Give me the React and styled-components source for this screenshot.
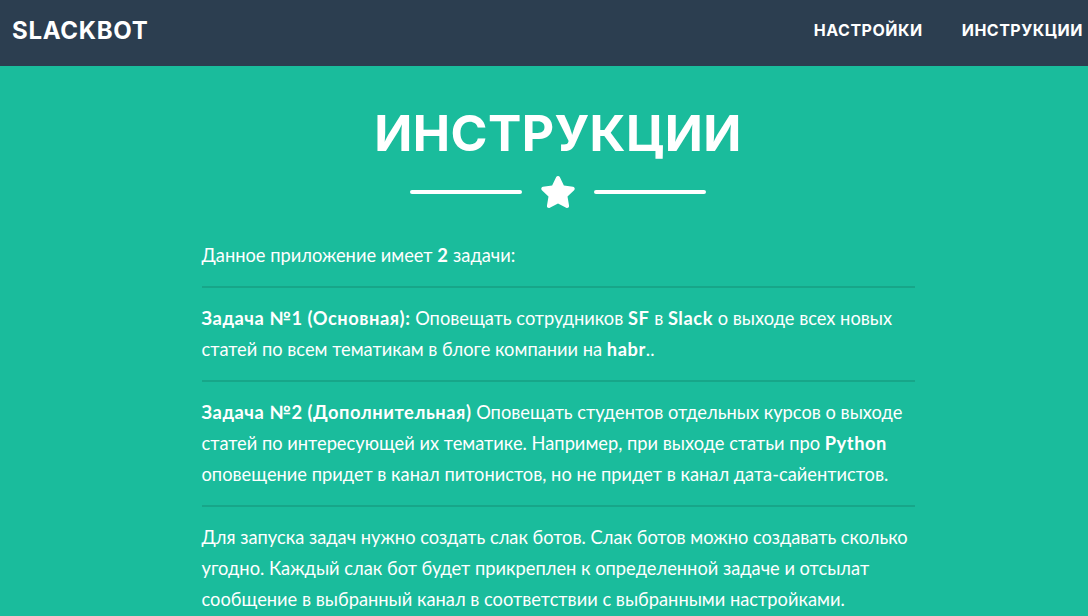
import React from 'react'
import styled, { createGlobalStyle } from 'styled-components'

const GlobalStyle = createGlobalStyle`
  html, body {
    margin: 0;
    padding: 0;
    background: #1abc9c;
  }
  body {
    font-family: Lato, "Liberation Sans", sans-serif;
  }
  * {
    box-sizing: border-box;
  }
`

function StarIcon() {
  return (
    <svg width="36" height="32" viewBox="0 0 576 512" aria-hidden="true">
      <path
        fill="#fff"
        d="M259.3 17.8L194 150.2 47.9 171.5c-26.2 3.8-36.7 36.1-17.7 54.6l105.7 103-25 145.5c-4.5 26.3 23.2 46 46.4 33.7L288 439.6l130.7 68.7c23.2 12.2 50.9-7.4 46.4-33.7l-25-145.5 105.7-103c19-18.5 8.5-50.8-17.7-54.6L382 150.2 316.7 17.8c-11.7-23.6-45.6-23.9-57.4 0z"
      />
    </svg>
  )
}

function App() {
  return (
    <>
      <GlobalStyle />
      <Navbar>
        <Brand>Slackbot</Brand>
        <NavLinks>
          <NavLink href="#settings">Настройки</NavLink>
          <NavLink href="#instructions">Инструкции</NavLink>
        </NavLinks>
      </Navbar>
      <Section>
        <Title>Инструкции</Title>
        <Divider>
          <DividerLine />
          <StarIcon />
          <DividerLine />
        </Divider>
        <Content>
          <Text>
            Данное приложение имеет <b>2</b> задачи:
          </Text>
          <Rule />
          <Text>
            <b>Задача №1 (Основная):</b> Оповещать сотрудников <b>SF</b> в <b>Slack</b> о
            выходе всех новых статей по всем тематикам в блоге компании на <b>habr</b>..
          </Text>
          <Rule />
          <Text>
            <b>Задача №2 (Дополнительная)</b> Оповещать студентов отдельных курсов о выходе
            статей по интересующей их тематике. Например, при выходе статьи про <b>Python</b>{' '}
            оповещение придет в канал питонистов, но не придет в канал дата-сайентистов.
          </Text>
          <Rule />
          <Text>
            Для запуска задач нужно создать слак ботов. Слак ботов можно создавать сколько
            угодно. Каждый слак бот будет прикреплен к определенной задаче и отсылат
            сообщение в выбранный канал в соответствии с выбранными настройками.
          </Text>
        </Content>
      </Section>
    </>
  )
}

const Navbar = styled.nav`
  height: 66px;
  background-color: #2c3e50;
  display: flex;
  align-items: center;
  justify-content: space-between;
  padding: 0 5px 6px 12px;
`

const Brand = styled.div`
  font-family: Inter, "Liberation Sans", sans-serif;
  font-weight: 700;
  font-size: 24px;
  letter-spacing: 0.7px;
  color: #fff;
  text-transform: uppercase;
`

const NavLinks = styled.div`
  display: flex;
  gap: 39px;
`

const NavLink = styled.a`
  font-family: Inter, "Liberation Sans", sans-serif;
  font-weight: 700;
  font-size: 16px;
  letter-spacing: 0.5px;
  color: #fff;
  text-decoration: none;
  text-transform: uppercase;
`

const Section = styled.section`
  display: flex;
  flex-direction: column;
  align-items: center;
  padding: 36px 0 0 28px;
  color: #fff;
`

const Title = styled.h1`
  margin: 0;
  font-family: Inter, "Liberation Sans", sans-serif;
  font-weight: 700;
  font-size: 50px;
  line-height: 62px;
  text-transform: uppercase;
  letter-spacing: 0.4px;
`

const Divider = styled.div`
  display: flex;
  align-items: center;
  gap: 18px;
  margin-top: 12px;
`

const DividerLine = styled.span`
  width: 112px;
  height: 4px;
  border-radius: 4px;
  background: #fff;
`

const Content = styled.div`
  width: 713px;
  margin-top: 32px;
`

const Text = styled.p`
  margin: 0;
  font-size: 18.3px;
  line-height: 31px;
  font-weight: 400;

  b {
    font-weight: 700;
    letter-spacing: 0.55px;
  }
`

const Rule = styled.hr`
  margin: 15px 0;
  border: 0;
  height: 2px;
  background: #17a689;
`

export default App
